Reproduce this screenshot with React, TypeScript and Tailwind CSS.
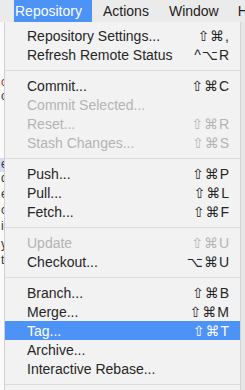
import React from "react";

type Item =
  | { sep: true }
  | { label: string; keys?: string; disabled?: boolean; active?: boolean };

const items: Item[] = [
  { label: "Repository Settings...", keys: "⇧⌘," },
  { label: "Refresh Remote Status", keys: "^⌥R" },
  { sep: true },
  { label: "Commit...", keys: "⇧⌘C" },
  { label: "Commit Selected...", disabled: true },
  { label: "Reset...", keys: "⇧⌘R", disabled: true },
  { label: "Stash Changes...", keys: "⇧⌘S", disabled: true },
  { sep: true },
  { label: "Push...", keys: "⇧⌘P" },
  { label: "Pull...", keys: "⇧⌘L" },
  { label: "Fetch...", keys: "⇧⌘F" },
  { sep: true },
  { label: "Update", keys: "⇧⌘U", disabled: true },
  { label: "Checkout...", keys: "⌥⌘U" },
  { sep: true },
  { label: "Branch...", keys: "⇧⌘B" },
  { label: "Merge...", keys: "⇧⌘M" },
  { label: "Tag...", keys: "⇧⌘T", active: true },
  { label: "Archive..." },
  { label: "Interactive Rebase..." },
  { sep: true },
];

function MenuRow({ item }: { item: Item }) {
  if ("sep" in item) {
    return (
      <div className="h-[12px] flex items-center">
        <div className="h-px w-full bg-[#dcdcdc]" />
      </div>
    );
  }
  const color = item.active
    ? "bg-[#4d92f6] text-white"
    : item.disabled
    ? "text-[#b4b4b4]"
    : "text-[#262626]";
  return (
    <div className={`h-[19px] flex items-center justify-between pl-[22px] pr-[10px] ${color}`}>
      <span>{item.label}</span>
      {item.keys && <span className="tracking-[1px]">{item.keys}</span>}
    </div>
  );
}

export default function App() {
  return (
    <div
      className="w-[245px] h-[390px] overflow-hidden bg-[#f6f6f6] flex flex-col text-[14px] leading-none"
      style={{ fontFamily: '"Liberation Sans", "DejaVu Sans", sans-serif' }}
    >
      <div className="h-[22px] shrink-0 flex items-center bg-[#ebebeb] text-[#222] pl-[14px] overflow-hidden whitespace-nowrap">
        <div className="h-full w-[78px] shrink-0 pl-[1px] flex items-center bg-[#4d92f6] text-white">
          Repository
        </div>
        <span className="ml-[11px] shrink-0">Actions</span>
        <span className="ml-[20px] shrink-0">Window</span>
        <span className="ml-[19px] shrink-0">Help</span>
      </div>
      <div className="flex flex-1 min-h-0">
        <div className="w-[5px] shrink-0 bg-[#fafafa] border-r border-[#cfcfcf] flex flex-col text-[12px] text-[#333] overflow-hidden">
          <div className="h-[54px]" />
          <div className="h-[14px] text-[#a33] pl-[1px]">ch</div>
          <div className="h-[18px] pl-[1px]">of</div>
          <div className="h-[50px]" />
          <div className="h-[14px] bg-[#cfe0f7] pl-[1px]">e</div>
          <div className="h-[16px] pl-[1px]">d</div>
          <div className="h-[16px] pl-[1px]">e</div>
          <div className="h-[16px] pl-[1px]">c</div>
          <div className="h-[18px] pl-[1px]">ic</div>
          <div className="h-[16px] pl-[1px]">y</div>
          <div className="h-[16px] pl-[1px]">t</div>
        </div>
        <div className="flex-1 bg-[#f2f2f2] pt-[4px] flex flex-col">
          {items.map((item, i) => (
            <MenuRow key={i} item={item} />
          ))}
        </div>
        <div className="w-[5px] shrink-0 bg-[#e6e6e6] border-l border-[#d4d4d4]" />
      </div>
    </div>
  );
}
